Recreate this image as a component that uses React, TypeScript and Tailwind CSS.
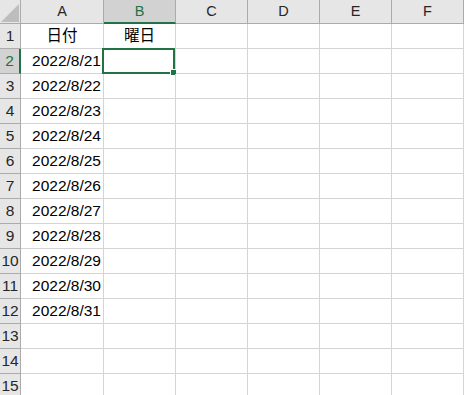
import React from 'react';

const cols = ['A', 'B', 'C', 'D', 'E', 'F'];
const colWidths = ['w-[83px]', 'w-[72px]', 'w-[72px]', 'w-[72px]', 'w-[72px]', 'w-[72px]'];

// column A values; row 1 holds the headers
const dates = Array.from({ length: 11 }, (_, i) => `2022/8/${21 + i}`);
const rows = Array.from({ length: 15 }, (_, i) => i + 1);

function cellValue(row: number, col: number) {
  if (row === 1 && col === 0) return '日付';
  if (row === 1 && col === 1) return '曜日';
  if (col === 0 && row >= 2 && row <= 12) return dates[row - 2];
  return '';
}

export default function App() {
  return (
    <div
      className="w-[464px] h-[395px] overflow-hidden bg-white text-black"
      style={{ fontFamily: '"Liberation Sans", "Noto Sans CJK JP", sans-serif' }}
    >
      {/* column headers */}
      <div className="flex h-[24px]">
        <div className="w-[21px] h-full shrink-0 bg-[#e6e6e6] border-r border-b border-[#ababab] flex items-end justify-end pr-[1px] pb-[1px]">
          <svg width="18" height="18" viewBox="0 0 18 18">
            <polygon points="18,0 18,18 0,18" fill="#bdbdbd" />
          </svg>
        </div>
        {cols.map((c, i) => {
          const active = c === 'B';
          return (
            <div
              key={c}
              className={`${colWidths[i]} h-full shrink-0 border-r flex items-center justify-center text-[14.5px] ${
                active
                  ? 'bg-[#d2d2d2] border-r-[#ababab] border-b-2 border-b-[#217346] text-[#217346] pt-[1px]'
                  : 'bg-[#e6e6e6] border-[#ababab] border-b text-[#262626]'
              }`}
            >
              {c}
            </div>
          );
        })}
      </div>

      {rows.map((r) => {
        const activeRow = r === 2;
        return (
          <div key={r} className="flex h-[25px]">
            <div
              className={`w-[21px] h-full shrink-0 border-b border-[#ababab] flex items-center justify-center text-[15.5px] leading-none ${
                activeRow
                  ? 'bg-[#d2d2d2] border-r-2 border-r-[#217346] text-[#217346]'
                  : 'bg-[#e6e6e6] border-r border-r-[#ababab] text-[#262626]'
              }`}
            >
              {r}
            </div>
            {cols.map((c, i) => {
              const v = cellValue(r, i);
              const selected = r === 2 && c === 'B';
              return (
                <div
                  key={c}
                  className={`${colWidths[i]} h-full shrink-0 relative border-r border-b border-[#d4d4d4] flex items-center text-[15.5px] leading-none ${
                    r === 1 ? 'justify-center' : 'justify-end pr-[2px]'
                  }`}
                >
                  {v}
                  {selected && (
                    <div className="absolute left-[-2px] top-[-1px] right-0 bottom-[-1px] border-2 border-[#217346]">
                      <div className="absolute right-[-4px] bottom-[-4px] w-[7px] h-[7px] bg-[#217346] border border-white" />
                    </div>
                  )}
                </div>
              );
            })}
          </div>
        );
      })}
    </div>
  );
}
